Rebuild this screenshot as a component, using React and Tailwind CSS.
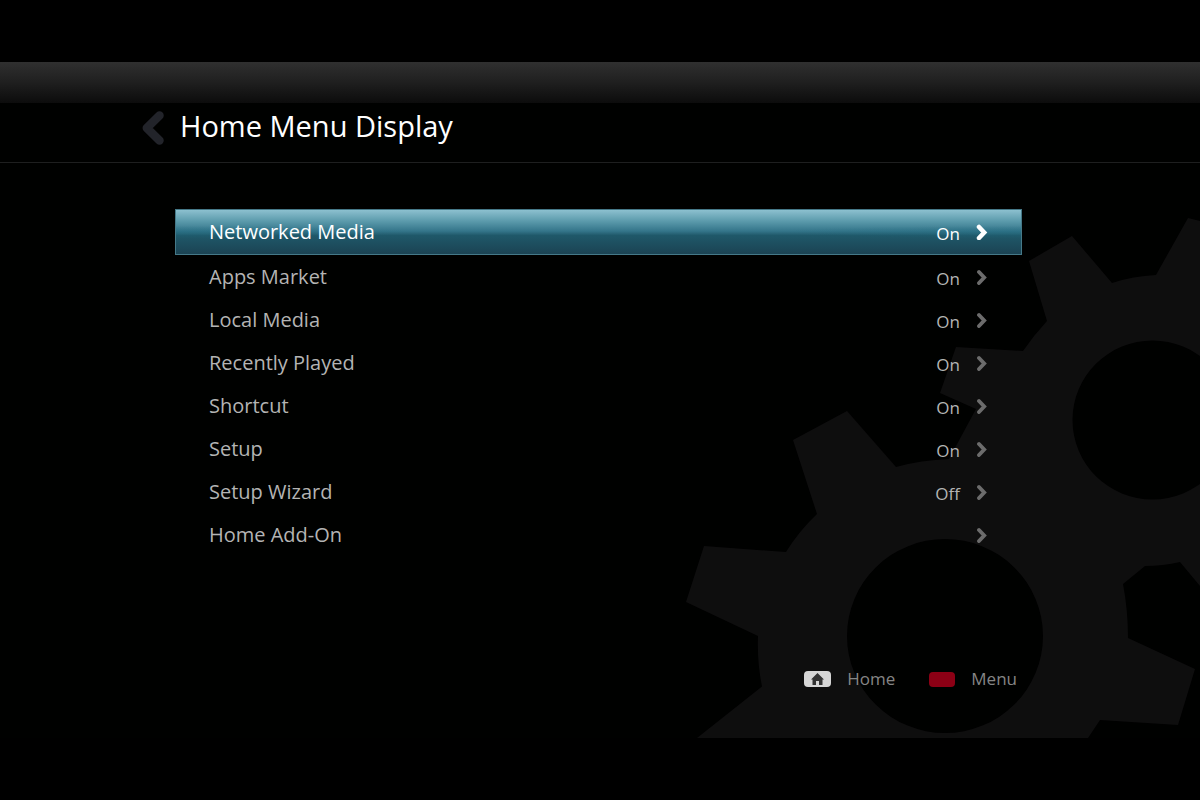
import { useState } from "react";

const initialItems = [
  { id: "networked", label: "Networked Media", value: "On" },
  { id: "apps", label: "Apps Market", value: "On" },
  { id: "local", label: "Local Media", value: "On" },
  { id: "recent", label: "Recently Played", value: "On" },
  { id: "shortcut", label: "Shortcut", value: "On" },
  { id: "setup", label: "Setup", value: "On" },
  { id: "wizard", label: "Setup Wizard", value: "Off" },
  { id: "addon", label: "Home Add-On", value: "" },
];

// Background artwork, the two gears share one outline
const Gears = () => (
  <svg
    className="pointer-events-none absolute right-0 bottom-0 h-[528px] w-[520px]"
    viewBox="680 210 520 528"
    fill="#0e0e0e"
    fillRule="evenodd"
    aria-hidden="true"
  >
    <path
      d="M697 738 L762 686.5 Q757 662 758 636 L686 602 L704 546 L786 552 Q799 531 817 514 L793 440
      L847 411 L896 467 Q921 460 949 459 L976 409 L940 393 L956 347 L1023 351 Q1034 335 1047 321
      L1029 261 L1072 236 L1112 283 Q1133 276 1156 275 L1188 218 L1200 221 V586 L1180 562
      Q1163 566 1145 566 L1123 584 Q1128 610 1128 638 L1195 669 L1178 725 L1100 720 L1088 738 Z
      M847 636 a98 97 0 1 0 196 0 a98 97 0 1 0 -196 0 Z
      M1072.500 420 a80 79.500 0 1 0 160 0 a80 79.500 0 1 0 -160 0 Z"
    />
  </svg>
);

const MenuItem = ({ item, active, onSelect }) => (
  <li>
    <button
      type="button"
      onClick={onSelect}
      className={
        active
          ? "flex h-[46px] w-full items-center border border-[#457988] bg-[radial-gradient(ellipse_at_left,#1f6b8066,transparent_20%),radial-gradient(ellipse_at_right,#1f6b8066,transparent_20%),linear-gradient(to_bottom,#8cc0cf_0%,#5c9bac_25%,#34758a_48%,#1f5869_58%,#1b4353_100%)] px-[33px] text-white"
          : "flex h-[43px] w-full items-center px-[34px] text-[#b4b4b4]"
      }
    >
      <span className="flex-1 text-left text-[20px] leading-[28px]">{item.label}</span>
      <span className="mt-1 text-[17px] leading-[24px]">{item.value}</span>
      <svg
        className={active ? "ml-4 h-4 w-3 text-white" : "ml-4 h-4 w-3 text-[#6c6c6c]"}
        viewBox="0 0 12 16"
        fill="none"
        stroke="currentColor"
        strokeWidth={active ? 4.5 : 3.8}
        strokeLinecap="round"
        strokeLinejoin="miter"
        aria-hidden="true"
      >
        <path d="M3 3 L8.200 8.500 L3 14" />
      </svg>
    </button>
  </li>
);

const App = () => {
  const [selected, setSelected] = useState("networked");

  return (
    <div className="min-h-screen bg-black py-[62px] font-['Open_Sans','Noto_Sans',sans-serif]">
      <main className="relative min-h-[676px] overflow-hidden bg-[#000100]">
        <Gears />
        <div className="h-[41px] bg-linear-to-b from-[#303030] via-[#1f1f1f] to-[#0c0c0c]" />
        <header className="flex h-[60px] items-center border-b border-[#1e1f1f] pb-[14px] pl-[142px]">
          <button type="button" aria-label="Back" className="mt-1">
            <svg
              className="h-9 w-[22px]"
              viewBox="0 0 22 36"
              fill="none"
              stroke="#22242a"
              strokeWidth="8.500"
              strokeLinecap="round"
              strokeLinejoin="round"
            >
              <path d="M17.500 5.500 L4.800 18 L17.500 30.500" />
            </svg>
          </button>
          <h1 className="ml-4 text-[29px] leading-[40px] text-white">Home Menu Display</h1>
        </header>

        <ul className="relative mt-[46px] mr-[178px] ml-[175px]">
          {initialItems.map((item) => (
            <MenuItem
              key={item.id}
              item={item}
              active={item.id === selected}
              onSelect={() => setSelected(item.id)}
            />
          ))}
        </ul>

        <footer className="relative mt-[109px] mr-[183px] flex items-center justify-end text-[17px] leading-[28px] text-[#858585]">
          <button type="button" className="flex items-center gap-4">
            <svg className="h-4 w-[27px]" viewBox="0 0 27 16" aria-hidden="true">
              <rect width="27" height="16" rx="4" fill="#d6d6d6" />
              <path
                d="M13.500 2 L20 8.500 H18.500 V14 H15 V10 H12 V14 H8.500 V8.500 H7 Z"
                fill="#333"
              />
            </svg>
            Home
          </button>
          <button type="button" className="ml-[34px] flex items-center gap-4">
            <span className="h-[15px] w-[26px] rounded bg-[#8c0015]" />
            Menu
          </button>
        </footer>
      </main>
    </div>
  );
};

export default App;
